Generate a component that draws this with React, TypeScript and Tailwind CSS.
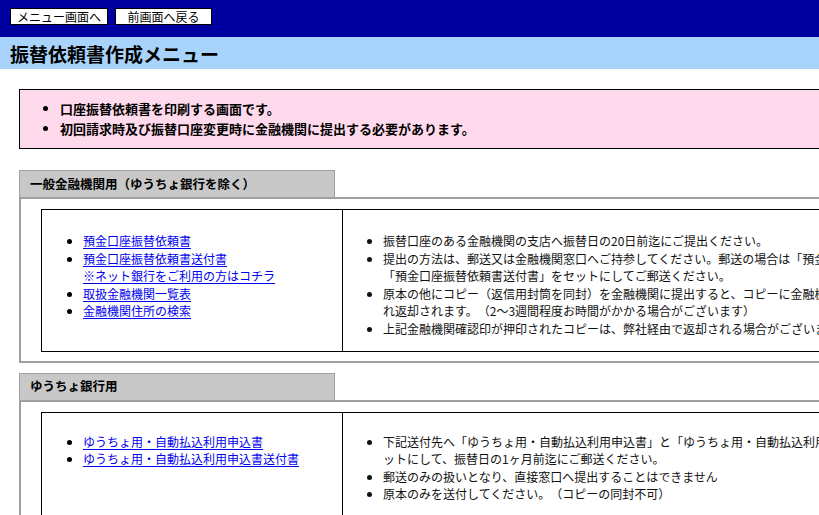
import React from "react";

const linkCls = "text-[#0000ee] underline underline-offset-[2px]";

function Section({
  title,
  links,
  notes,
  topPad,
}: {
  title: string;
  links: React.ReactNode[];
  notes: string[];
  topPad: string;
}) {
  return (
    <div>
      <div className="w-[316px] h-[27px] bg-[#c8c8c8] border border-b-0 border-[#a0a0a0] pl-[10px] flex items-center text-[12.5px] font-bold text-black">
        {title}
      </div>
      <div className="border-2 border-[#a0a0a0] px-[20px] pt-[10px] pb-[9px]">
        <div className="flex border border-black">
          <div className={"w-[301px] shrink-0 border-r border-black pb-[13px] " + topPad}>
            <ul className="list-disc pl-[41px] text-[12px] leading-[17.6px]">
              {links.map((l, i) => (
                <li key={i}>{l}</li>
              ))}
            </ul>
          </div>
          <div className={"flex-1 pb-[13px] pr-[2px] " + topPad}>
            <ul className="list-disc pl-[40px] text-[12px] leading-[17.6px] text-[#111]">
              {notes.map((n, i) => (
                <li key={i}>{n}</li>
              ))}
            </ul>
          </div>
        </div>
      </div>
    </div>
  );
}

export default function App() {
  return (
    <div className="h-screen w-screen overflow-hidden bg-white font-['Noto_Sans_CJK_JP','Liberation_Sans',sans-serif] text-black [text-spacing-trim:space-all]">
      <div className="w-[980px]">
        <div className="h-[37px] bg-[#0000a0] pt-[8px] pl-[10px] flex items-start gap-[7px]">
          <button className="w-[98px] h-[17px] bg-white border border-black text-[12px] leading-[15px] text-black flex items-center justify-center">
            メニュー画面へ
          </button>
          <button className="w-[97px] h-[17px] bg-white border border-black text-[12px] leading-[15px] text-black flex items-center justify-center">
            前画面へ戻る
          </button>
        </div>
        <div className="h-[32px] bg-[#a8d4fc] pl-[10px] flex items-center">
          <h1 className="text-[19px] font-bold leading-none">振替依頼書作成メニュー</h1>
        </div>

        <div className="px-[19px] pt-[20px]">
          <div className="bg-[#ffd9ec] border border-black py-[9px]">
            <ul className="list-disc pl-[40px] text-[13px] font-bold leading-[20px]">
              <li>口座振替依頼書を印刷する画面です。</li>
              <li>初回請求時及び振替口座変更時に金融機関に提出する必要があります。</li>
            </ul>
          </div>

          <div className="mt-[21px]">
            <Section
              topPad="pt-[22px]"
              title="一般金融機関用（ゆうちょ銀行を除く）"
              links={[
                <a className={linkCls} href="#">預金口座振替依頼書</a>,
                <>
                  <a className={linkCls} href="#">預金口座振替依頼書送付書</a>
                  <br />
                  <a className={linkCls} href="#">※ネット銀行をご利用の方はコチラ</a>
                </>,
                <a className={linkCls} href="#">取扱金融機関一覧表</a>,
                <a className={linkCls} href="#">金融機関住所の検索</a>,
              ]}
              notes={[
                "振替口座のある金融機関の支店へ振替日の20日前迄にご提出ください。",
                "提出の方法は、郵送又は金融機関窓口へご持参してください。郵送の場合は「預金口座振替依頼書」と「預金口座振替依頼書送付書」をセットにしてご郵送ください。",
                "原本の他にコピー（返信用封筒を同封）を金融機関に提出すると、コピーに金融機関の確認印が押印され返却されます。（2～3週間程度お時間がかかる場合がございます）",
                "上記金融機関確認印が押印されたコピーは、弊社経由で返却される場合がございます。",
              ]}
            />
          </div>

          <div className="mt-[10px]">
            <Section
              topPad="pt-[20px]"
              title="ゆうちょ銀行用"
              links={[
                <a className={linkCls} href="#">ゆうちょ用・自動払込利用申込書</a>,
                <a className={linkCls} href="#">ゆうちょ用・自動払込利用申込書送付書</a>,
              ]}
              notes={[
                "下記送付先へ「ゆうちょ用・自動払込利用申込書」と「ゆうちょ用・自動払込利用申込書送付書」をセットにして、振替日の1ヶ月前迄にご郵送ください。",
                "郵送のみの扱いとなり、直接窓口へ提出することはできません",
                "原本のみを送付してください。（コピーの同封不可）",
              ]}
            />
          </div>
        </div>
      </div>
    </div>
  );
}
